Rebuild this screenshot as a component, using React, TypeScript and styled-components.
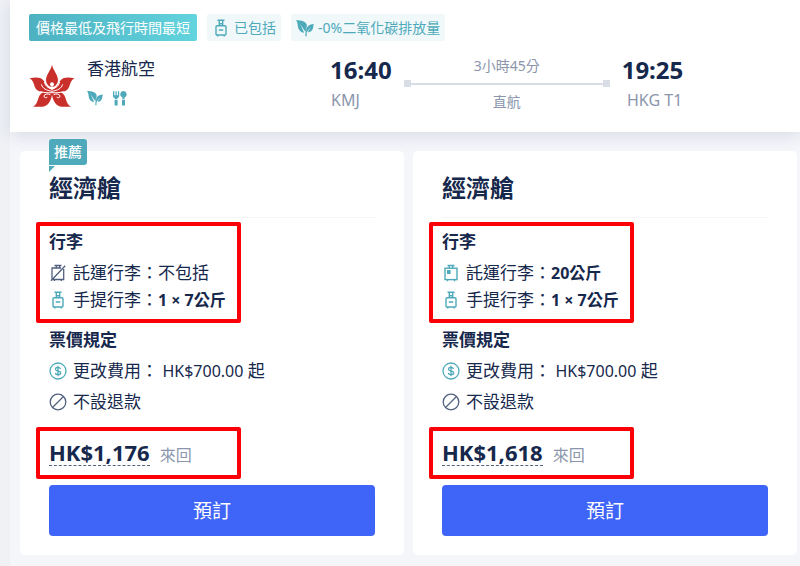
import React from "react";
import styled, { createGlobalStyle } from "styled-components";

const navy = "#16284c";
const teal = "#4eaaba";
const grey = "#8b96ac";

const GlobalStyle = createGlobalStyle`
  * { box-sizing: border-box; }
  body {
    margin: 0;
    background: #eff1f5;
    color: ${navy};
    font-family: "Noto Sans", "Noto Sans CJK TC", sans-serif;
    font-size: 17px;
    line-height: 22px;
  }
  h2, h3, p, ul { margin: 0; padding: 0; }
  svg { display: block; flex: none; }
`;

const Page = styled.main`
  margin-left: 10px;
  min-height: 100vh;
  background: #f5f6fa;
`;

const Header = styled.header`
  padding: 14px 19px 19px;
  background: #fff;
  box-shadow: 0 4px 16px rgba(40, 55, 100, 0.13);
`;

const Tags = styled.div`
  display: flex;
  gap: 10px;
`;

const Tag = styled.span<{ $solid?: boolean }>`
  display: flex;
  align-items: center;
  gap: 4px;
  height: 27px;
  padding: 0 ${(p) => (p.$solid ? 7 : 5)}px;
  border-radius: 2px;
  font-size: 14px;
  white-space: nowrap;
  color: ${(p) => (p.$solid ? "#fff" : teal)};
  background: ${(p) => (p.$solid ? "linear-gradient(90deg, #4db1c1, #62d4de)" : "#f0f8fa")};
`;

const Flight = styled.div`
  display: grid;
  grid-template-columns: minmax(200px, 289px) auto minmax(120px, 206px) auto;
  column-gap: 12px;
  justify-content: start;
  margin-top: 14px;
`;

const Airline = styled.div`
  display: flex;
  align-items: flex-start;
  gap: 12px;
`;

const LogoBox = styled.div`
  padding-top: 9px;
`;

const Amenities = styled.div`
  display: flex;
  gap: 9px;
  margin-top: 10px;
`;

const AirlineName = styled.div`
  padding-top: 3px;
`;

const Stop = styled.div<{ $end?: boolean }>`
  text-align: ${(p) => (p.$end ? "right" : "left")};
`;

const Time = styled.div`
  font-size: 24px;
  line-height: 30px;
  font-weight: 700;
`;

const Airport = styled.div`
  margin-top: 4px;
  padding: 0 1px;
  font-size: 16px;
  color: ${grey};
`;

const Leg = styled.div`
  text-align: center;
  font-size: 14px;
  color: ${grey};
`;

const Line = styled.div`
  display: flex;
  align-items: center;
  justify-content: space-between;
  height: 7px;
  margin: 3px 0 4px;
  background: linear-gradient(#d9dde5, #d9dde5) center / 100% 2px no-repeat;

  &::before,
  &::after {
    content: "";
    width: 7px;
    height: 7px;
    background: #d9dde5;
  }
`;

const Cards = styled.div`
  display: grid;
  grid-template-columns: 1fr 1fr;
  gap: 9px;
  padding: 19px 3px 11px 10px;
`;

const Card = styled.section`
  position: relative;
  padding: 19px 29px;
  border-radius: 5px;
  background: #fff;
`;

const Badge = styled.span`
  position: absolute;
  top: -12px;
  left: 29px;
  height: 26px;
  padding: 0 5px;
  border-radius: 3px 3px 3px 0;
  background: ${teal};
  color: #fff;
  font-size: 14px;
  font-weight: 500;
  line-height: 26px;

  &::after {
    content: "";
    position: absolute;
    top: 27px;
    left: 0;
    border-top: 6px solid ${teal};
    border-right: 6px solid transparent;
  }
`;

const Title = styled.h2`
  padding-bottom: 11px;
  border-bottom: 1px solid #f3f5f7;
  font-size: 24px;
  line-height: 36px;
  font-weight: 700;
`;

const Marked = styled.div`
  width: 205px;
  margin-left: -13px;
  border: 4px solid #fb0007;
  border-radius: 2px;
  padding: 0 9px;
`;

const BaggageBox = styled(Marked)`
  margin-top: 4px;
  padding-top: 5px;
  padding-bottom: 6px;
`;

const PriceBox = styled(Marked)`
  display: flex;
  align-items: center;
  gap: 10px;
  height: 52px;
  margin-top: 10px;
`;

const Rules = styled.div`
  margin-top: 6px;
`;

const Heading = styled.h3`
  font-size: 17px;
  line-height: 22px;
  font-weight: 700;
`;

const List = styled.ul<{ $row: number; $top: number }>`
  margin-top: ${(p) => p.$top}px;
  list-style: none;

  li {
    display: flex;
    align-items: center;
    gap: 6px;
    height: ${(p) => p.$row}px;
    white-space: nowrap;
  }

  b {
    font-size: 16px;
  }
`;

const Latin = styled.span`
  font-size: 16px;
`;

const Price = styled.span`
  border-bottom: 1px dashed #52607f;
  font-size: 22px;
  line-height: 25px;
  font-weight: 700;
`;

const Trip = styled.span`
  padding-top: 4px;
  font-size: 16px;
  color: ${grey};
`;

const Book = styled.button`
  display: block;
  width: 100%;
  height: 51px;
  margin-top: 6px;
  border: 0;
  border-radius: 4px;
  background: #3f64f8;
  color: #fff;
  font: inherit;
  font-size: 19px;
  cursor: pointer;
`;

const CabinBag = () => (
  <svg width="18" height="18" viewBox="0 0 18 18" fill="none" stroke={teal} strokeWidth="1.4" aria-hidden="true">
    <path d="M5.500 1.200h7M7.300 1.500V7M10.700 1.500V7M7.300 4.800h3.400M6.800 11h4.400M5.800 16v1.500M12.200 16v1.500" />
    <rect x="4" y="6.800" width="10" height="9.200" rx="1" />
  </svg>
);

const CheckedBag = () => (
  <svg width="18" height="18" viewBox="0 0 18 18" fill="none" stroke={teal} strokeWidth="1.4" aria-hidden="true">
    <path d="M5.500 1.500h7M7.300 1.800V4.500M10.700 1.800V4.500M5.500 15.500v1.800M12.500 15.500v1.800" />
    <rect x="3" y="4.200" width="12" height="11.400" />
    <path d="M5 6h3.600v4H5z" fill={teal} stroke="none" />
  </svg>
);

const NoBag = () => (
  <svg width="18" height="18" viewBox="0 0 18 18" fill="none" stroke="#52607f" strokeWidth="1.3" aria-hidden="true">
    <path d="M5.500 1.500h7M7.300 1.800v2.400M10.700 1.800v2.400M5.500 15.500v1.500M12.300 15.500v1.500M12 4H3v11.500h11.700V5M2 16.800 16.200 1.800" />
  </svg>
);

const Dollar = () => (
  <svg width="18" height="18" viewBox="0 0 18 18" fill="none" stroke={teal} strokeWidth="1.3" aria-hidden="true">
    <circle cx="9" cy="9" r="8" />
    <path d="M11.500 6.900C11.100 5.900 10.200 5.400 9 5.400c-1.500 0-2.500.7-2.500 1.800 0 2.500 5.200 1.100 5.200 3.700 0 1.100-1.100 1.800-2.700 1.800-1.400 0-2.400-.6-2.700-1.700M9 3.800v10.400" />
  </svg>
);

const Barred = () => (
  <svg width="18" height="18" viewBox="0 0 18 18" fill="none" stroke="#52607f" strokeWidth="1.3" aria-hidden="true">
    <circle cx="9" cy="9" r="7.800" />
    <path d="M3.500 14.500l11-11" />
  </svg>
);

const Leaf = ({ size }: { size: number }) => (
  <svg width={size} height={size} viewBox="0 0 18 18" fill={teal} aria-hidden="true">
    <path d="M0 1.200c5.500.1 10 1.300 10.800 4.500.5 2-1.100 4.300-1.300 7.300L4.200 5.200l4 8.600C4.600 13.400 2.400 11 2 8 1.700 5.400 1.500 3 0 1.200z" />
    <path d="M18 5c-.8 1.400-.5 3.200-1.300 5-.8 1.900-2.400 3.400-4.900 3.200l3.100-5.100-4 5c-.3 1.500-.3 2.600-.2 4.100H9.400c-.1-2.200.1-3.600.6-5.200C10.400 7.500 13 5.300 18 5z" />
  </svg>
);

const Cutlery = () => (
  <svg width="16" height="16" viewBox="0 0 16 16" fill={teal} aria-hidden="true">
    <path d="M1 1.200h1.300v4h1.200v-4h1.200v4h1.200v-4h1.300V6c0 1.100-.6 1.700-1.700 1.900V9H2.700V7.900C1.600 7.700 1 7.100 1 6zM2.600 9.700h3v5.800h-3z" />
    <path d="M11.500 1a3.300 3.300 0 0 1 1 6.400V9h-2V7.400a3.300 3.300 0 0 1 1-6.400zM10 9.700h3v5.800h-3z" />
  </svg>
);

const Logo = () => (
  <svg width="46" height="44" viewBox="0 0 138 132" role="img" aria-label="香港航空">
    <g fill="#c9302c">
      <path d="M69 2C72 19 87 31 87 49c0 9-5 15-12 19-4-2-8-2-12 0-7-4-12-10-12-19C51 31 66 19 69 2z" />
      <path d="M2 43c18-5 36-4 43 8 5 10 8 20 24 27v6C52 86 42 85 31 82 12 77 20 54 2 43z" />
      <path d="M136 43c-18-5-36-4-43 8-5 10-8 20-24 27v6c17 2 27 1 38-2 19-5 11-28 29-39z" />
      <path d="M69 83v9c-3 20-14 36-30 36H12c16-8 14-31 24-39 8-6 19-7 33-6z" />
      <path d="M69 83v9c3 20 14 36 30 36h27c-16-8-14-31-24-39-8-6-19-7-33-6z" />
    </g>
    <circle cx="69" cy="61" r="6" fill="#fff" />
    <g fill="none" stroke="#fff" strokeWidth="3">
      <path d="M46 54c4 14 12 18 23 21 11-3 19-7 23-21M37 61c4 13 15 18 32 21 17-3 28-8 32-21M34 83c12 3 22 4 35 3 13 1 23 0 35-3" />
      <path d="M64 92c-7-4-18-2-19 4 0 5 6 7 10 3M74 92c7-4 18-2 19 4 0 5-6 7-10 3" />
    </g>
  </svg>
);

type Fare = { price: string; checked?: string; recommended?: boolean };

const fares: Fare[] = [
  { price: "HK$1,176", recommended: true },
  { price: "HK$1,618", checked: "20公斤" },
];

const FareCard = ({ price, checked, recommended }: Fare) => (
  <Card>
    {recommended && <Badge>推薦</Badge>}
    <Title>經濟艙</Title>
    <BaggageBox>
      <Heading>行李</Heading>
      <List $row={27} $top={6}>
        <li>
          {checked ? <CheckedBag /> : <NoBag />}
          <span>託運行李：{checked ? <b>{checked}</b> : "不包括"}</span>
        </li>
        <li>
          <CabinBag />
          <span>手提行李：<b>1 × 7公斤</b></span>
        </li>
      </List>
    </BaggageBox>
    <Rules>
      <Heading>票價規定</Heading>
      <List $row={31} $top={4}>
        <li>
          <Dollar />
          <span>更改費用： <Latin>HK$700.00</Latin> 起</span>
        </li>
        <li>
          <Barred />
          <span>不設退款</span>
        </li>
      </List>
    </Rules>
    <PriceBox>
      <Price>{price}</Price>
      <Trip>來回</Trip>
    </PriceBox>
    <Book type="button">預訂</Book>
  </Card>
);

export default function App() {
  return (
    <>
      <GlobalStyle />
      <Page>
        <Header>
          <Tags>
            <Tag $solid>價格最低及飛行時間最短</Tag>
            <Tag><CabinBag />已包括</Tag>
            <Tag><Leaf size={18} />-0%二氧化碳排放量</Tag>
          </Tags>
          <Flight>
            <Airline>
              <LogoBox><Logo /></LogoBox>
              <AirlineName>
                香港航空
                <Amenities>
                  <Leaf size={16} />
                  <Cutlery />
                </Amenities>
              </AirlineName>
            </Airline>
            <Stop>
              <Time>16:40</Time>
              <Airport>KMJ</Airport>
            </Stop>
            <Leg>
              3小時45分
              <Line />
              直航
            </Leg>
            <Stop $end>
              <Time>19:25</Time>
              <Airport>HKG T1</Airport>
            </Stop>
          </Flight>
        </Header>
        <Cards>
          {fares.map((fare) => (
            <FareCard key={fare.price} {...fare} />
          ))}
        </Cards>
      </Page>
    </>
  );
}
